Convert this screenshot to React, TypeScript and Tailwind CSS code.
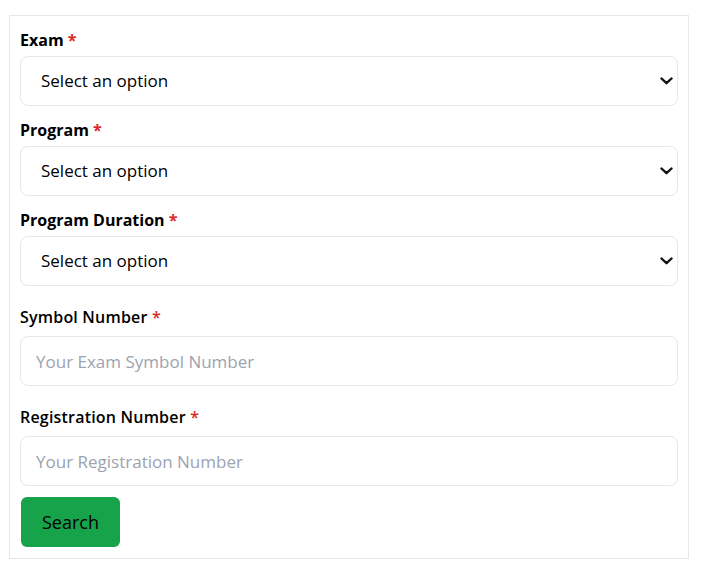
import { useState } from 'react'

const options = ['Select an option']

function Chevron() {
    return (
        <svg className="pointer-events-none absolute right-[5px] top-1/2 -translate-y-1/2" width="13" height="8" viewBox="0 0 13 8" fill="none">
            <path d="M1.5 1.5L6.5 6.2L11.5 1.5" stroke="#111" strokeWidth="2.4" strokeLinecap="round" strokeLinejoin="round" />
        </svg>
    )
}

function Label({ text, bold }: { text: string; bold?: boolean }) {
    return (
        <label className={`block text-[16px] leading-6 text-black ${bold ? 'font-bold' : 'font-semibold tracking-[0.2px]'}`}>
            {text} <span className="text-[#dc2626]">*</span>
        </label>
    )
}

function SelectField({ label, last }: { label: string; last?: boolean }) {
    const [value, setValue] = useState('')
    return (
        <div className={last ? '' : 'mb-3'}>
            <Label text={label} bold />
            <div className="relative mt-1">
                <select
                    value={value}
                    onChange={(e) => setValue(e.target.value)}
                    className="block h-[50px] w-full appearance-none rounded-lg border border-[#e5e7eb] bg-white pl-5 pr-8 text-[17px] text-black outline-none"
                >
                    {options.map((o) => (
                        <option key={o} value="">{o}</option>
                    ))}
                </select>
                <Chevron />
            </div>
        </div>
    )
}

function InputField({ label, placeholder }: { label: string; placeholder: string }) {
    return (
        <div className="mt-[19px]">
            <Label text={label} />
            <input
                type="text"
                placeholder={placeholder}
                className="mt-[7px] block h-[50px] w-full rounded-lg border border-[#e5e7eb] bg-white px-[15px] text-[17px] text-black outline-none placeholder:text-[#9ca3af]"
            />
        </div>
    )
}

export default function App() {
    return (
        <div className="bg-white min-h-[564px] pt-[15px] pl-[9px]" style={{ fontFamily: '"Open Sans", "Noto Sans", sans-serif' }}>
            <form className="w-[680px] border border-[#e5e7eb] px-[10px] pt-[12px] pb-[11px]" onSubmit={(e) => e.preventDefault()}>
                <SelectField label="Exam" />
                <SelectField label="Program" />
                <SelectField label="Program Duration" last />
                <InputField label="Symbol Number" placeholder="Your Exam Symbol Number" />
                <InputField label="Registration Number" placeholder="Your Registration Number" />
                <button type="submit" className="mt-[11px] ml-px h-[50px] w-[99px] rounded-md bg-[#16a34a] text-[18px] text-black">
                    Search
                </button>
            </form>
        </div>
    )
}
